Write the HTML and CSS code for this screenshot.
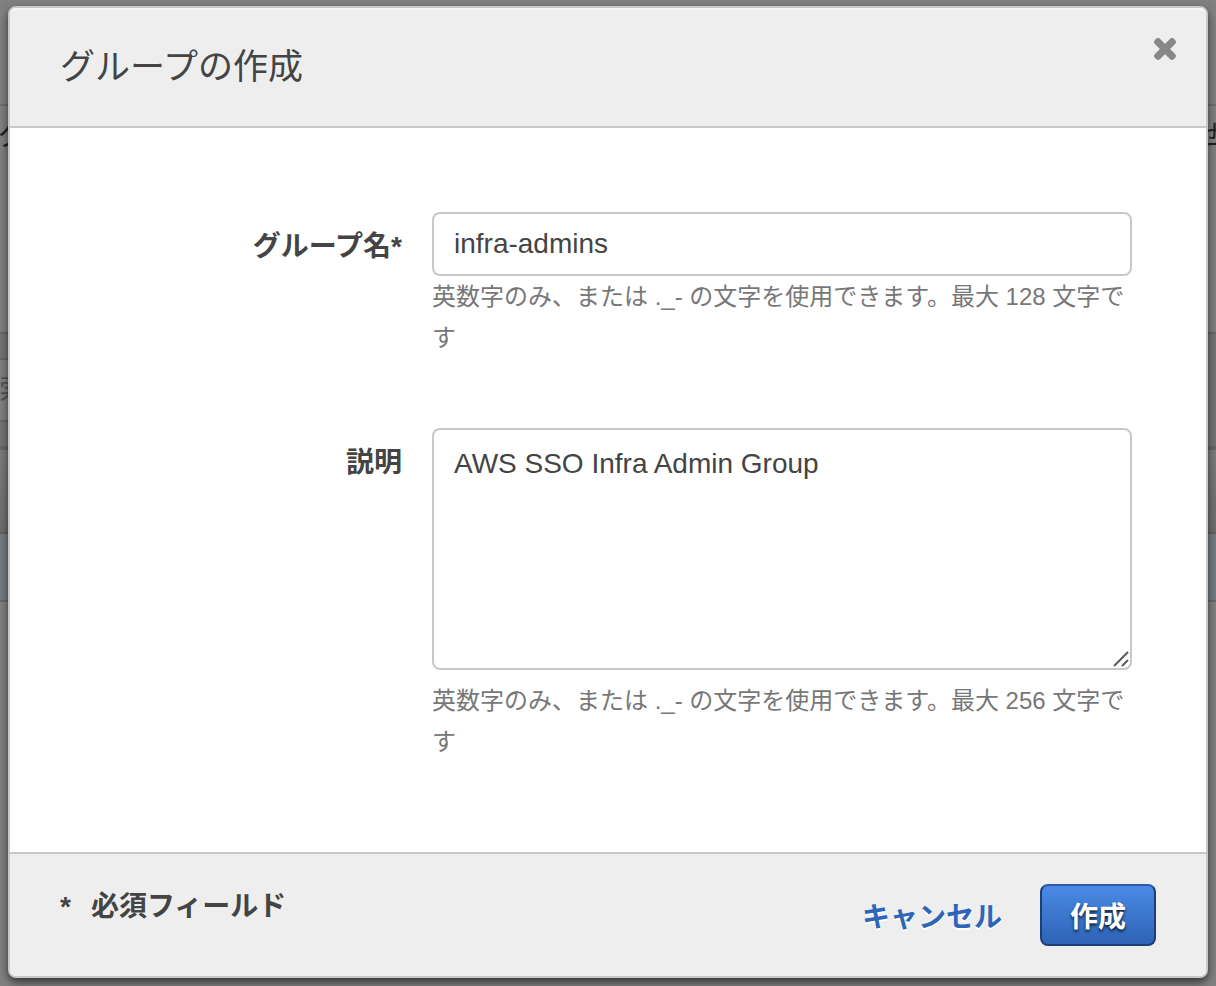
FILE: index.html
```html
<!DOCTYPE html>
<html lang="ja">
<head>
<meta charset="utf-8">
<title>グループの作成</title>
<link rel="stylesheet" href="styles.css">
</head>
<body>
<div class="screen">
  <div class="page" aria-hidden="true">
    <div class="page-top"></div>
    <div class="page-nav"><span class="nav-left">グ</span><span class="nav-right">せ</span></div>
    <div class="page-toolbar"><div class="page-search">索</div></div>
    <div class="page-head"></div>
    <div class="page-row"></div>
  </div>
  <main class="modal" role="dialog" aria-labelledby="title">
    <header class="modal-header">
      <h1 class="modal-title" id="title">グループの作成</h1>
      <button class="close" type="button" aria-label="閉じる">
        <svg class="close-icon" viewBox="0 0 22 22"><path d="M4.2 4.2 17.8 17.8M17.8 4.2 4.2 17.8" fill="none" stroke="#888" stroke-width="6" stroke-linecap="square"/><path d="M4 4 18 18M18 4 4 18" fill="none" stroke="#888" stroke-width="7.4" stroke-linecap="round"/></svg>
      </button>
    </header>
    <form class="modal-form" id="group-form">
      <div class="field">
        <label class="label" for="name">グループ名*</label>
        <div class="control">
          <input class="text-input" id="name" type="text" value="infra-admins">
          <p class="help">英数字のみ、または ._- の文字を使用できます。最大 128 文字です</p>
        </div>
      </div>
      <div class="field">
        <label class="label" for="description">説明</label>
        <div class="control">
          <div class="textarea-wrap">
            <textarea class="text-input text-area" id="description">AWS SSO Infra Admin Group</textarea>
            <svg class="grip" viewBox="0 0 16 16"><path d="M1 15 15 1M9 15 15 9" fill="none" stroke="#5c5c5c" stroke-width="2"/></svg>
          </div>
          <p class="help help-spaced">英数字のみ、または ._- の文字を使用できます。最大 256 文字です</p>
        </div>
      </div>
    </form>
    <footer class="modal-footer">
      <p class="required"><span>*</span><span>必須フィールド</span></p>
      <div class="actions">
        <a class="cancel" href="#">キャンセル</a>
        <button class="create" type="submit" form="group-form">作成</button>
      </div>
    </footer>
  </main>
</div>
</body>
</html>
```
FILE: styles.css
```css
* {
  box-sizing: border-box;
}

body {
  margin: 0;
  background: #808080;
  color: #444;
  font-family: "Liberation Sans", "Noto Sans CJK JP", sans-serif;
  font-size: 28px;
}

h1,
p {
  margin: 0;
}

.screen {
  display: grid;
  min-height: 100vh;
  overflow: hidden;
}

.page,
.modal {
  grid-area: 1 / 1;
  min-width: 0;
}

/* Dimmed page behind the dialog */
.page-top {
  height: 106px;
  border-bottom: 2px solid #6d6d6d;
}

.page-nav {
  display: flex;
  justify-content: space-between;
  height: 228px;
  padding-top: 10px;
  border-bottom: 2px solid #686868;
  color: #222;
  line-height: 40px;
}

.nav-left {
  margin-left: -2px;
}

.nav-right {
  margin-right: -7px;
}

.page-toolbar {
  height: 116px;
  padding: 24px 0;
  background: #757575;
  border-bottom: 4px solid #666;
}

.page-search {
  width: 50%;
  height: 64px;
  border: solid #686868;
  border-width: 2px 0;
  background: #808080;
  color: #555;
  line-height: 60px;
  text-indent: -1px;
}

.page-head {
  height: 84px;
  border-bottom: 2px solid #626262;
  background: linear-gradient(#7c7c7c, #6e6e6e);
}

.page-row {
  height: 68px;
  border-bottom: 2px solid #686868;
  background: #757c80;
}

/* Dialog */
.modal {
  display: flex;
  flex-direction: column;
  align-self: start;
  z-index: 1;
  margin: 6px 8px 8px;
  border: 2px solid #c8c8c8;
  border-radius: 8px;
  background: #fff;
  box-shadow: 0 4px 8px rgba(0, 0, 0, 0.6);
}

.modal-header {
  display: flex;
  align-items: flex-start;
  justify-content: space-between;
  padding: 30px 30px 30px 50px;
  border-bottom: 2px solid #c8c8c8;
  border-radius: 6px 6px 0 0;
  background: #eee;
  box-shadow: inset 0 2px #f6f6f6;
}

.modal-title {
  font-size: 35px;
  font-weight: 400;
  line-height: 58px;
}

.close {
  display: flex;
  padding: 0;
  border: 0;
  background: none;
}

.close-icon {
  width: 22px;
  height: 22px;
}

.modal-form {
  display: flex;
  flex-direction: column;
  gap: 70px;
  padding: 84px 74px 90px;
}

.field {
  display: grid;
  grid-template-columns: 159fr 350fr;
  column-gap: 30px;
}

.label {
  padding-top: 14px;
  font-weight: 700;
  line-height: 42px;
  text-align: right;
}

.text-input {
  display: block;
  width: 100%;
  height: 64px;
  padding: 0 20px;
  border: 2px solid #c8c8c8;
  border-radius: 8px;
  background: #fff;
  color: #444;
  font: inherit;
}

.textarea-wrap {
  position: relative;
}

.text-area {
  height: 242px;
  padding-top: 14px;
  line-height: 40px;
  resize: none;
}

.grip {
  position: absolute;
  right: 3px;
  bottom: 3px;
  width: 16px;
  height: 16px;
}

.help {
  color: #777;
  font-size: 24px;
  line-height: 41px;
}

.help-spaced {
  padding-top: 10px;
}

.modal-footer {
  display: flex;
  align-items: flex-start;
  justify-content: space-between;
  padding: 30px 50px;
  border-top: 2px solid #c8c8c8;
  border-radius: 0 0 6px 6px;
  background: #eee;
}

.required {
  display: flex;
  gap: 20px;
  font-weight: 700;
  line-height: 46px;
}

.actions {
  display: flex;
  align-items: center;
  gap: 38px;
}

.cancel {
  color: #2e65b8;
  font-weight: 700;
  text-decoration: none;
  text-shadow: 0 2px #fff;
}

.create {
  height: 62px;
  padding: 0 28px;
  border: 2px solid #1c3f74;
  border-top-color: #2a5cab;
  border-radius: 8px;
  background: linear-gradient(#4a8ae6, #2e63b5);
  color: #fff;
  font: inherit;
  font-weight: 700;
  text-shadow: 0 2px 3px rgba(0, 0, 0, 0.8);
}
```
